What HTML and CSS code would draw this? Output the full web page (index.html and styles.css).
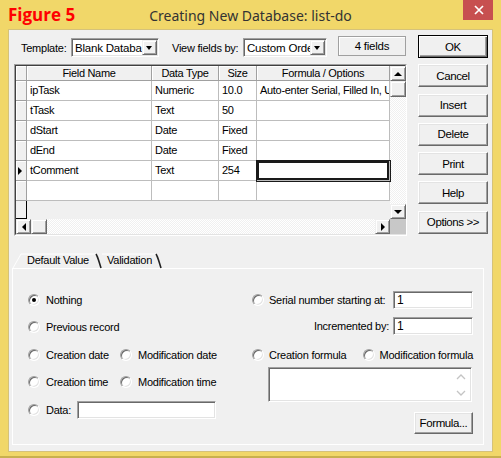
FILE: index.html
```html
<!DOCTYPE html>
<html lang="en">
<head>
  <meta charset="UTF-8">
  <title>Creating New Database: list-do</title>
  <link rel="stylesheet" href="styles.css">
</head>
<body>
  <div class="window">
    <div class="titlebar">
      <span class="figure">Figure 5</span>
      <span class="title">Creating New Database: list-do</span>
      <span class="close">
        <svg width="30" height="20" viewBox="0 0 30 20"><path d="M12 6 L20 14 M20 6 L12 14" stroke="#fff" stroke-width="1.7" fill="none"/></svg>
      </span>
    </div>

    <div class="client">
      <div class="top">
        <div class="main">
          <div class="toolbar">
            <span class="lbl lbl-template">Template:</span>
            <div class="combo combo-template"><span>Blank Databa</span><i class="drop"></i></div>
            <span class="lbl lbl-view">View fields by:</span>
            <div class="combo combo-view"><span>Custom Orde</span><i class="drop"></i></div>
            <div class="count">4 fields</div>
          </div>

          <div class="grid">
            <div class="grid-inner">
              <div class="grid-body">
                <div class="row head">
                  <div class="cell c-rh"></div>
                  <div class="cell c-name">Field Name</div>
                  <div class="cell c-type">Data Type</div>
                  <div class="cell c-size">Size</div>
                  <div class="cell c-opt">Formula / Options</div>
                </div>
                <div class="row">
                  <div class="cell c-rh"></div>
                  <div class="cell c-name">ipTask</div>
                  <div class="cell c-type">Numeric</div>
                  <div class="cell c-size">10.0</div>
                  <div class="cell c-opt">Auto-enter Serial, Filled In, Unique</div>
                </div>
                <div class="row">
                  <div class="cell c-rh"></div>
                  <div class="cell c-name">tTask</div>
                  <div class="cell c-type">Text</div>
                  <div class="cell c-size">50</div>
                  <div class="cell c-opt"></div>
                </div>
                <div class="row">
                  <div class="cell c-rh"></div>
                  <div class="cell c-name">dStart</div>
                  <div class="cell c-type">Date</div>
                  <div class="cell c-size">Fixed</div>
                  <div class="cell c-opt"></div>
                </div>
                <div class="row">
                  <div class="cell c-rh"></div>
                  <div class="cell c-name">dEnd</div>
                  <div class="cell c-type">Date</div>
                  <div class="cell c-size">Fixed</div>
                  <div class="cell c-opt"></div>
                </div>
                <div class="row">
                  <div class="cell c-rh current"><i class="pointer"></i></div>
                  <div class="cell c-name">tComment</div>
                  <div class="cell c-type">Text</div>
                  <div class="cell c-size">254</div>
                  <div class="cell c-opt selected"></div>
                </div>
                <div class="row">
                  <div class="cell c-rh"></div>
                  <div class="cell c-name"></div>
                  <div class="cell c-type"></div>
                  <div class="cell c-size"></div>
                  <div class="cell c-opt"></div>
                </div>
                <div class="filler"><div class="filler-rh"></div></div>
                <div class="hscroll">
                  <div class="sbtn"><i class="arrow left"></i></div>
                  <div class="sbtn thumb-h"></div>
                  <div class="track"></div>
                  <div class="sbtn"><i class="arrow right"></i></div>
                </div>
              </div>
              <div class="vscroll">
                <div class="sbtn"><i class="arrow up"></i></div>
                <div class="sbtn thumb-v"></div>
                <div class="track"></div>
                <div class="sbtn"><i class="arrow down"></i></div>
                <div class="corner"></div>
              </div>
            </div>
          </div>
        </div>

        <div class="buttons">
          <button class="btn default">OK</button>
          <button class="btn">Cancel</button>
          <button class="btn">Insert</button>
          <button class="btn">Delete</button>
          <button class="btn">Print</button>
          <button class="btn">Help</button>
          <button class="btn">Options &gt;&gt;</button>
        </div>
      </div>

      <div class="tabs">
        <svg class="tab-lines" width="160" height="17" viewBox="0 0 160 17">
          <path d="M1 16 L9 2 L84 2" stroke="#fff" stroke-width="1" fill="none"/>
          <path d="M90 2 L144 2" stroke="#fff" stroke-width="1" fill="none"/>
          <path d="M84 2 C86 5 87 10 89 16" stroke="#222" stroke-width="1.6" fill="none"/>
          <path d="M144 2 C146 5 147 10 149 16" stroke="#222" stroke-width="1.6" fill="none"/>
        </svg>
        <span class="tab tab-default">Default Value</span>
        <span class="tab tab-valid">Validation</span>
      </div>

      <div class="panel">
        <div class="col-left">
          <div class="opt-row"><span class="radio checked"></span><span class="opt-label">Nothing</span></div>
          <div class="opt-row"><span class="radio"></span><span class="opt-label">Previous record</span></div>
          <div class="opt-row">
            <div class="opt-pair"><span class="radio"></span><span class="opt-label">Creation date</span></div>
            <span class="radio"></span><span class="opt-label">Modification date</span>
          </div>
          <div class="opt-row">
            <div class="opt-pair"><span class="radio"></span><span class="opt-label">Creation time</span></div>
            <span class="radio"></span><span class="opt-label">Modification time</span>
          </div>
          <div class="opt-row">
            <span class="radio"></span><span class="opt-label data-label">Data:</span>
            <div class="field data-field"></div>
          </div>
        </div>

        <div class="col-right">
          <div class="serial-row">
            <span class="radio"></span><span class="opt-label">Serial number starting at:</span>
            <div class="field num-field">1</div>
          </div>
          <div class="incr-row">
            <span class="incr-label">Incremented by:</span>
            <div class="field num-field">1</div>
          </div>
          <div class="formula-row">
            <div class="opt-pair wide"><span class="radio"></span><span class="opt-label">Creation formula</span></div>
            <span class="radio"></span><span class="opt-label">Modification formula</span>
          </div>
          <div class="field formula-box">
            <svg class="chevrons" width="10" height="28" viewBox="0 0 10 28">
              <path d="M1 8 L5 4 L9 8" stroke="#c4c4c4" stroke-width="1.3" fill="none"/>
              <path d="M1 20 L5 24 L9 20" stroke="#c4c4c4" stroke-width="1.3" fill="none"/>
            </svg>
          </div>
          <button class="btn formula-btn">Formula...</button>
        </div>
      </div>
    </div>
  </div>
</body>
</html>
```

FILE: styles.css
```css
/* Reset */
* {
  margin: 0;
  padding: 0;
  box-sizing: border-box;
}

body {
  background: #f1d769;
  font-family: "Liberation Sans", Arial, sans-serif;
  font-size: 11px;
  color: #000;
  width: 501px;
  height: 458px;
  overflow: hidden;
}

.window {
  width: 501px;
  height: 458px;
  background: #f1d769;
  border-bottom: 2px solid #c9b04e;
}

/* Title bar */
.titlebar {
  height: 29px;
  display: grid;
  grid-template-columns: 1fr auto 1fr;
  align-items: center;
}

.figure {
  padding-left: 8px;
  font-family: "Open Sans", "Liberation Sans", sans-serif;
  font-weight: 700;
  font-size: 17px;
  color: #ff0000;
  line-height: 29px;
}

.title {
  font-family: "Noto Sans", "Liberation Sans", sans-serif;
  font-size: 14px;
  color: #333;
  padding-top: 1px;
}

.close {
  justify-self: end;
  align-self: start;
  margin-right: 8px;
  width: 30px;
  height: 20px;
  background: #c75050;
  display: block;
}

.close svg {
  display: block;
}

/* Client area */
.client {
  margin: 0 8px;
  height: 423px;
  background: #f0f0f0;
  border: 1px solid #d5c27a;
  padding: 5px 0 0 5px;
  letter-spacing: -0.25px;
}

.top {
  display: flex;
  height: 201px;
}

.main {
  width: 393px;
}

/* Toolbar */
.toolbar {
  display: flex;
  align-items: center;
  height: 25px;
  margin-bottom: 4px;
  padding-left: 7px;
}

.lbl {
  white-space: nowrap;
}

.lbl-template {
  width: 50px;
}

.lbl-view {
  width: 71px;
  margin-left: 13px;
}

.combo {
  height: 19px;
  background: #fff;
  border: 1px solid;
  border-color: #a0a0a0 #fff #fff #a0a0a0;
  box-shadow: inset 1px 1px #696969, inset -1px -1px #e3e3e3;
  display: flex;
  align-items: center;
  padding: 1px 1px 1px 3px;
  overflow: hidden;
}

.combo span {
  flex: 1;
  white-space: nowrap;
  overflow: hidden;
  font-size: 11.5px;
  letter-spacing: -0.2px;
}

.combo-template {
  width: 88px;
}

.combo-view {
  width: 84px;
}

.drop {
  width: 15px;
  height: 15px;
  flex: none;
  background: #f0f0f0;
  border: 1px solid;
  border-color: #f0f0f0 #696969 #696969 #f0f0f0;
  box-shadow: inset 1px 1px #fff, inset -1px -1px #a0a0a0;
  position: relative;
}

.drop::after {
  content: "";
  position: absolute;
  left: 3px;
  top: 5px;
  border-left: 3.5px solid transparent;
  border-right: 3.5px solid transparent;
  border-top: 4px solid #000;
}

.count {
  align-self: flex-start;
  margin-top: 1px;
  margin-left: 11px;
  width: 68px;
  height: 20px;
  border: 1px solid #a0a0a0;
  box-shadow: inset 1px 1px #fff;
  text-align: center;
  line-height: 18px;
  font-size: 11.5px;
}

/* Field grid */
.grid {
  height: 172px;
  border: 1px solid;
  border-color: #a0a0a0 #fff #fff #a0a0a0;
}

.grid-inner {
  height: 100%;
  display: flex;
  border: 1px solid;
  border-color: #404040 #e3e3e3 #e3e3e3 #404040;
}

.grid-body {
  width: 374px;
  display: flex;
  flex-direction: column;
}

.row {
  display: flex;
  height: 20px;
}

.cell {
  height: 100%;
  background: #fff;
  border-right: 1px solid #bdbdbd;
  border-bottom: 1px solid #bdbdbd;
  padding-left: 3px;
  line-height: 19px;
  white-space: nowrap;
  overflow: hidden;
  font-size: 11px;
  letter-spacing: -0.3px;
}

.c-rh { width: 11px; }
.c-name { width: 125px; }
.c-type { width: 67px; }
.c-size { width: 38px; }
.c-opt { width: 133px; }

.row .c-rh,
.row.head .cell {
  background: #f0f0f0;
  border-right-color: #a0a0a0;
  border-bottom-color: #a0a0a0;
  box-shadow: inset 1px 1px #fff;
}

.row.head {
  height: 15px;
}

.row.head .cell {
  text-align: center;
  line-height: 14px;
  padding-left: 0;
}

.current {
  display: flex;
  align-items: center;
  padding-left: 2px;
}

.pointer {
  border-left: 4px solid #000;
  border-top: 4px solid transparent;
  border-bottom: 4px solid transparent;
}

.selected {
  box-shadow: 0 0 0 1px #1a1a1a, inset 0 0 0 2px #1a1a1a;
  position: relative;
}

.filler {
  height: 18px;
  background: #f0f0f0;
}

.filler-rh {
  width: 11px;
  height: 100%;
  border-right: 1px solid #000;
  border-bottom: 1px solid #000;
}

/* Scroll bars */
.hscroll {
  display: flex;
  height: 15px;
}

.vscroll {
  width: 16px;
  display: flex;
  flex-direction: column;
}

.sbtn {
  flex: none;
  width: 15px;
  height: 15px;
  background: #f0f0f0;
  border: 1px solid;
  border-color: #f0f0f0 #696969 #696969 #f0f0f0;
  box-shadow: inset 1px 1px #fff, inset -1px -1px #a0a0a0;
  display: flex;
  align-items: center;
  justify-content: center;
}

.vscroll .sbtn {
  width: 16px;
}

.thumb-h {
  width: 16px;
}

.thumb-v {
  height: 16px;
}

.track {
  flex: 1;
  background: repeating-conic-gradient(#f0f0f0 0 25%, #fff 0 50%) 0 0 / 2px 2px;
}

.corner {
  height: 15px;
  background: #c8c8c8;
}

.arrow {
  width: 0;
  height: 0;
}

.arrow.up {
  border-left: 4px solid transparent;
  border-right: 4px solid transparent;
  border-bottom: 4px solid #000;
}

.arrow.down {
  border-left: 4px solid transparent;
  border-right: 4px solid transparent;
  border-top: 4px solid #000;
}

.arrow.left {
  border-top: 4px solid transparent;
  border-bottom: 4px solid transparent;
  border-right: 4px solid #000;
}

.arrow.right {
  border-top: 4px solid transparent;
  border-bottom: 4px solid transparent;
  border-left: 4px solid #000;
}

/* Command buttons */
.buttons {
  width: 70px;
  margin-left: 11px;
  display: flex;
  flex-direction: column;
  gap: 6.3px;
}

.btn {
  height: 23px;
  background: #f0f0f0;
  border: 1px solid;
  border-color: #fff #696969 #696969 #fff;
  box-shadow: inset -1px -1px #a0a0a0, inset 1px 1px #e3e3e3;
  font-family: "Liberation Sans", Arial, sans-serif;
  font-size: 11.5px;
  letter-spacing: -0.4px;
  color: #000;
}

.btn.default {
  border: 1px solid #000;
  box-shadow: inset 1px 1px #fff, inset -1px -1px #696969, inset -2px -2px #a0a0a0;
}

/* Tabs */
.tabs {
  position: relative;
  height: 16px;
  margin: 16px 0 0 -2px;
}

.tab-lines {
  position: absolute;
  left: 0;
  top: 0;
}

.tab {
  position: absolute;
  top: 2px;
  font-size: 11px;
}

.tab-default {
  left: 15px;
}

.tab-valid {
  left: 95px;
}

.panel {
  margin-left: -2px;
  width: 472px;
  height: 177px;
  border: 1px solid #fff;
  display: flex;
  padding: 17px 0 0 15px;
}

.col-left {
  width: 224px;
}

.opt-row {
  height: 27.5px;
  display: flex;
  align-items: center;
}

.opt-pair {
  width: 92px;
  display: flex;
  align-items: center;
}

.opt-pair.wide {
  width: 111px;
}

.radio {
  flex: none;
  width: 12px;
  height: 12px;
  border-radius: 50%;
  background: #fff;
  border: 1px solid;
  border-color: #a0a0a0 #fff #fff #a0a0a0;
  box-shadow: inset 1px 1px #696969, inset -1px -1px #e3e3e3;
  display: flex;
  align-items: center;
  justify-content: center;
}

.radio.checked::after {
  content: "";
  width: 4px;
  height: 4px;
  border-radius: 50%;
  background: #000;
}

.opt-label {
  margin-left: 6px;
  white-space: nowrap;
}

.data-label {
  margin-right: 6px;
}

.field {
  background: #fff;
  border: 1px solid;
  border-color: #a0a0a0 #fff #fff #a0a0a0;
  box-shadow: inset 1px 1px #696969, inset -1px -1px #e3e3e3;
}

.data-field {
  width: 139px;
  height: 18px;
}

.col-right {
  width: 221px;
  display: flex;
  flex-direction: column;
}

.serial-row {
  height: 27px;
  display: flex;
  align-items: center;
}

.serial-row .opt-label {
  margin-left: 5px;
}

.num-field {
  margin-left: auto;
  width: 80px;
  height: 18px;
  padding-left: 3px;
  line-height: 16px;
  font-size: 12px;
}

.incr-row {
  height: 25px;
  display: flex;
  align-items: center;
}

.incr-label {
  flex: 1;
  text-align: right;
  padding-right: 4px;
}

.formula-row {
  height: 24px;
  margin-top: 5px;
  display: flex;
  align-items: center;
}

.formula-row .opt-label {
  margin-left: 5px;
}

.formula-box {
  margin-left: 16px;
  width: 204px;
  height: 35px;
  display: flex;
  justify-content: flex-end;
  align-items: center;
  padding-right: 5px;
}

.formula-btn {
  margin-top: 10px;
  margin-left: auto;
  width: 59px;
  height: 22px;
}
```
